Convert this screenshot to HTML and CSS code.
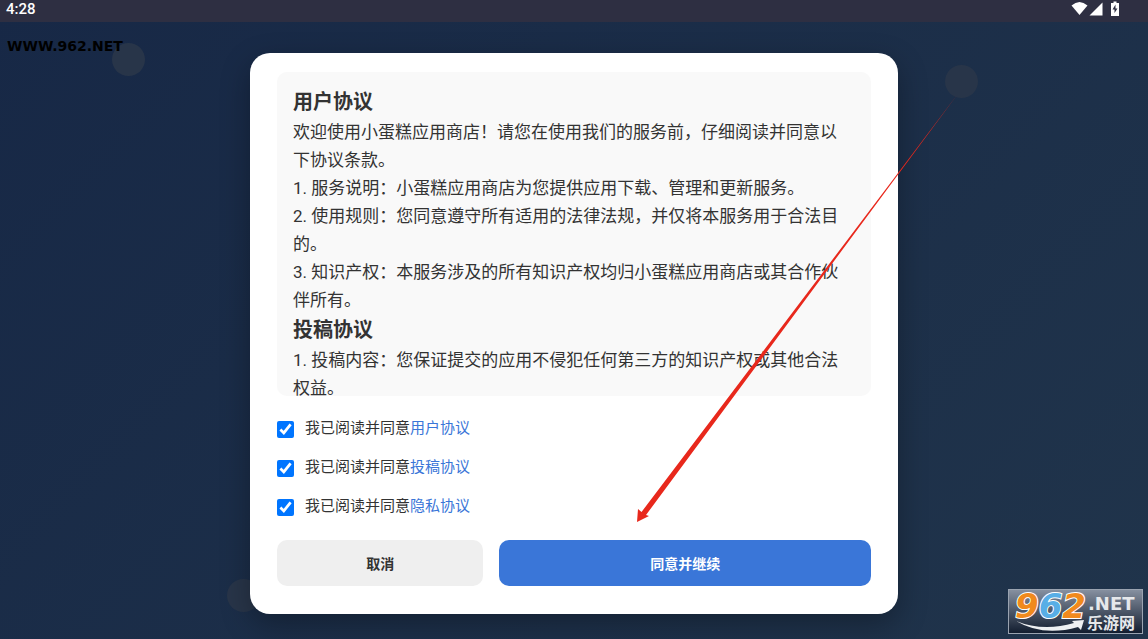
FILE: index.html
```html
<!DOCTYPE html>
<html lang="zh-CN">
<head>
  <meta charset="UTF-8">
  <meta name="viewport" content="width=device-width, initial-scale=1.0">
  <title>用户协议</title>
  <link rel="stylesheet" href="styles.css">
</head>
<body>
  <header class="status-bar">
    <span>4:28</span>
    <svg class="status-icons" width="52" height="18" viewBox="0 0 52 18" aria-hidden="true">
      <path d="M0.5 5.5Q8.500 -1.500 16.500 5.500L8.500 15Z" fill="#fff"/>
      <path d="M18.500 15.500L31.500 2.500V15.500Z" fill="#fff"/>
      <path d="M42.500 1.500H45.500V3H48V16H40V3H42.500Z" fill="#fff"/>
      <path d="M44.500 4.500L41.500 9.500H43.500V13L46.500 8.500H44.500Z" fill="#2e2f42"/>
    </svg>
  </header>

  <main class="page">
    <span class="dot dot-1"></span>
    <span class="dot dot-2"></span>
    <span class="dot dot-3"></span>

    <form class="card">
      <div class="agreement">
        <h2>用户协议</h2>
        <p>欢迎使用小蛋糕应用商店！请您在使用我们的服务前，仔细阅读并同意以下协议条款。</p>
        <p>1. 服务说明：小蛋糕应用商店为您提供应用下载、管理和更新服务。</p>
        <p>2. 使用规则：您同意遵守所有适用的法律法规，并仅将本服务用于合法目的。</p>
        <p>3. 知识产权：本服务涉及的所有知识产权均归小蛋糕应用商店或其合作伙伴所有。</p>
        <h2>投稿协议</h2>
        <p>1. 投稿内容：您保证提交的应用不侵犯任何第三方的知识产权或其他合法权益。</p>
      </div>

      <div class="checks">
        <div class="check">
          <input type="checkbox" id="agree-user" checked>
          <label for="agree-user">我已阅读并同意<a href="#user">用户协议</a></label>
        </div>
        <div class="check">
          <input type="checkbox" id="agree-post" checked>
          <label for="agree-post">我已阅读并同意<a href="#post">投稿协议</a></label>
        </div>
        <div class="check">
          <input type="checkbox" id="agree-privacy" checked>
          <label for="agree-privacy">我已阅读并同意<a href="#privacy">隐私协议</a></label>
        </div>
      </div>

      <div class="actions">
        <button type="button" class="btn btn-cancel">取消</button>
        <button type="submit" class="btn btn-agree">同意并继续</button>
      </div>
    </form>
  </main>

  <span class="site-url">WWW.962.NET</span>

  <svg class="arrow" width="324" height="430" viewBox="0 0 324 430" aria-hidden="true">
    <path d="M1 429L2 416L5.500 419L321 2L10 422L13 423Z" fill="#e8281c"/>
  </svg>

  <svg class="logo" width="136" height="46" viewBox="0 0 136 46" role="img" aria-label="962.NET 乐游网">
    <defs>
      <linearGradient id="logo-bg" x1="0" y1="0" x2="0" y2="1">
        <stop offset="0" stop-color="#8791a1"/>
        <stop offset="1" stop-color="#111c2e"/>
      </linearGradient>
    </defs>
    <rect x="0.500" y="0.500" width="134" height="44" fill="url(#logo-bg)" stroke="#9aa3b0"/>
    <text x="7" y="29" class="logo-num"><tspan fill="#f08a1d">9</tspan><tspan fill="#58aee6">6</tspan><tspan fill="#f08a1d">2</tspan></text>
    <path d="M8 32Q35 43 66 34L64 32L76 31L73 41L70 38Q35 48 8 32Z" fill="#eef0f2"/>
    <text x="80" y="21" class="logo-net">.NET</text>
    <text x="79" y="40" class="logo-cn">乐游网</text>
  </svg>
</body>
</html>
```

FILE: styles.css
```css
* {
  box-sizing: border-box;
}

body {
  margin: 0;
  min-height: 100vh;
  display: flex;
  flex-direction: column;
  font-family: Roboto, "Noto Sans CJK SC", sans-serif;
  color: #333;
  background: linear-gradient(135deg, #172846, #20344b);
}

.status-bar {
  display: flex;
  justify-content: space-between;
  align-items: center;
  height: 22px;
  padding: 0 25px 4px 6px;
  background: #2e2f42;
  color: #fff;
  font-size: 15px;
  font-weight: 500;
}

.page {
  position: relative;
  flex: 1;
  display: flex;
  align-items: center;
  justify-content: center;
  padding: 31px 16px 25px;
}

.dot {
  position: absolute;
  width: 33px;
  height: 33px;
  border-radius: 50%;
  background: #283549;
}

.dot-1 {
  left: 112px;
  top: 21px;
}

.dot-2 {
  right: 170px;
  top: 43px;
}

.dot-3 {
  left: 227px;
  bottom: 27px;
}

.card {
  position: relative;
  width: 100%;
  max-width: 648px;
  padding: 19px 27px 28px;
  background: #fff;
  border-radius: 20px;
  box-shadow: 0 10px 30px rgba(0, 0, 0, 0.3);
}

.agreement {
  max-height: 324px;
  padding: 14px 20px 14px 16px;
  overflow-y: auto;
  scrollbar-width: none;
  background: #f9f9f9;
  border-radius: 10px;
}

.agreement h2 {
  margin: 0;
  font-size: 20px;
  line-height: 32px;
}

.agreement p {
  margin: 0;
  font-size: 17px;
  line-height: 28px;
}

.checks {
  display: flex;
  flex-direction: column;
  gap: 15px;
  margin: 20px 0 22px;
}

.check {
  display: flex;
  align-items: flex-end;
  gap: 11px;
  font-size: 15px;
  line-height: 24px;
}

.check input {
  width: 17px;
  height: 17px;
  margin: 0 0 2px;
  accent-color: #0075ff;
}

.check a {
  color: #3a76d8;
  text-decoration: none;
}

.actions {
  display: flex;
  gap: 16px;
}

.btn {
  flex: 1;
  height: 46px;
  padding: 0;
  border: none;
  border-radius: 10px;
  font-family: inherit;
  font-size: 14px;
  font-weight: bold;
  cursor: pointer;
}

.btn-cancel {
  background: #efefef;
  color: #333;
}

.btn-agree {
  flex-grow: 1.8;
  background: #3a76d8;
  color: #fff;
}

/* overlays */
.site-url {
  position: absolute;
  left: 7px;
  top: 38px;
  font: bold 14px/16px "DejaVu Sans", sans-serif;
  color: #000;
}

.arrow {
  position: absolute;
  left: 636px;
  top: 93px;
  pointer-events: none;
}

.logo {
  position: absolute;
  right: 4px;
  bottom: 4px;
  overflow: visible;
}

.logo-num {
  font: italic bold 34px "DejaVu Sans", sans-serif;
  stroke: #fff;
  stroke-width: 2px;
  paint-order: stroke;
}

.logo-net {
  font: bold 18px "DejaVu Sans", sans-serif;
  fill: #e6e8eb;
}

.logo-cn {
  font: bold 16px "Noto Sans CJK SC", sans-serif;
  fill: #e6e8eb;
}
```
